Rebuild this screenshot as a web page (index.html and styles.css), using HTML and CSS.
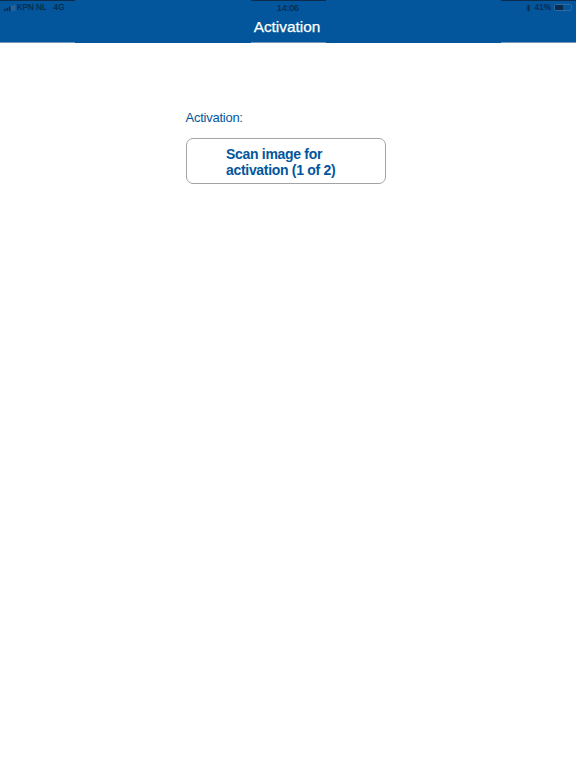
FILE: index.html
```html
<!DOCTYPE html>
<html lang="en">
<head>
<meta charset="utf-8">
<title>Activation</title>
<link rel="stylesheet" href="styles.css">
</head>
<body>
<header class="bar">
  <div class="marks top"><i></i><i></i><i></i></div>
  <div class="status">
    <div class="status-left">
      <svg class="signal" width="12" height="6" viewBox="0 0 12 6"><rect x="0" y="4" width="1.7" height="2" fill="#0b2c4d"/><rect x="2.4" y="3" width="1.7" height="3" fill="#0b2c4d"/><rect x="4.8" y="1.5" width="1.7" height="4.5" fill="#0b2c4d"/><rect x="7.2" y="0.5" width="1.7" height="5.5" fill="#2f6a9f"/><rect x="9.6" y="0" width="1.7" height="6" fill="#2f6a9f"/></svg>
      <span>KPN NL</span><span class="net">4G</span>
    </div>
    <div class="status-time">14:06</div>
    <div class="status-right">
      <svg class="bt" width="5" height="8" viewBox="0 0 5 8"><path d="M0.4 2 L4 5.4 L2.3 7.2 V0.8 L4 2.6 L0.4 6" fill="none" stroke="#0b2c4d" stroke-width="1"/></svg>
      <span class="pct">41%</span>
      <div class="battery"><div class="level"></div></div>
    </div>
  </div>
  <h1 class="title">Activation</h1>
  <div class="marks bottom"><i></i><i></i><i></i></div>
</header>
<main class="content">
  <p class="label">Activation:</p>
  <button class="scan" type="button">Scan image for<br>activation (1 of 2)</button>
</main>
</body>
</html>
```
FILE: styles.css
```css
* { box-sizing: border-box; }
html, body { margin: 0; height: 100%; background: #fff; }
body { font-family: "Liberation Sans", Arial, sans-serif; overflow: hidden; }
.bar { height: 43px; background: #03569b; display: flex; flex-direction: column; }
.marks { display: flex; justify-content: space-between; height: 1px; flex: none; }
.marks i { display: block; width: 75px; }
.marks.top i { background: #0b2c4d; }
.marks.bottom i { background: #6f94b4; }
.status { height: 13px; display: grid; grid-template-columns: 1fr auto 1fr; align-items: center; padding: 0 4px; font-size: 8.2px; color: #08294a; -webkit-text-stroke: 0.2px #08294a; flex: none; }
.status-left { display: flex; align-items: center; gap: 1px; }
.net { margin-left: 6px; }
.status-time { font-size: 8.8px; }
.status-right { display: flex; align-items: center; justify-content: flex-end; gap: 2px; }
.pct { margin: 0 1px 0 2px; }
.battery { width: 18px; height: 7px; border: 1px solid #2f6a9f; border-radius: 2px; }
.level { width: 8px; height: 100%; background: #0b2c4d; }
.title { margin: 0; flex: 1; display: flex; align-items: center; justify-content: center; color: #fff; font-size: 15.4px; font-weight: 400; -webkit-text-stroke: 0.25px #fff; padding: 0 2px 2px 0; }
.content { width: 200.5px; margin: 0 0 0 185.5px; padding-top: 67px; }
.label { margin: 0 0 12px; color: #03569b; font-size: 13px; line-height: 16px; letter-spacing: -0.25px; }
.scan { display: block; width: 100%; height: 46px; padding: 1px 0 0 39.5px; background: #fff; border: 1px solid #a3a3a3; border-radius: 7px; color: #03569b; font: 700 14px/16px "Liberation Sans", Arial, sans-serif; letter-spacing: -0.31px; text-align: left; }
```
